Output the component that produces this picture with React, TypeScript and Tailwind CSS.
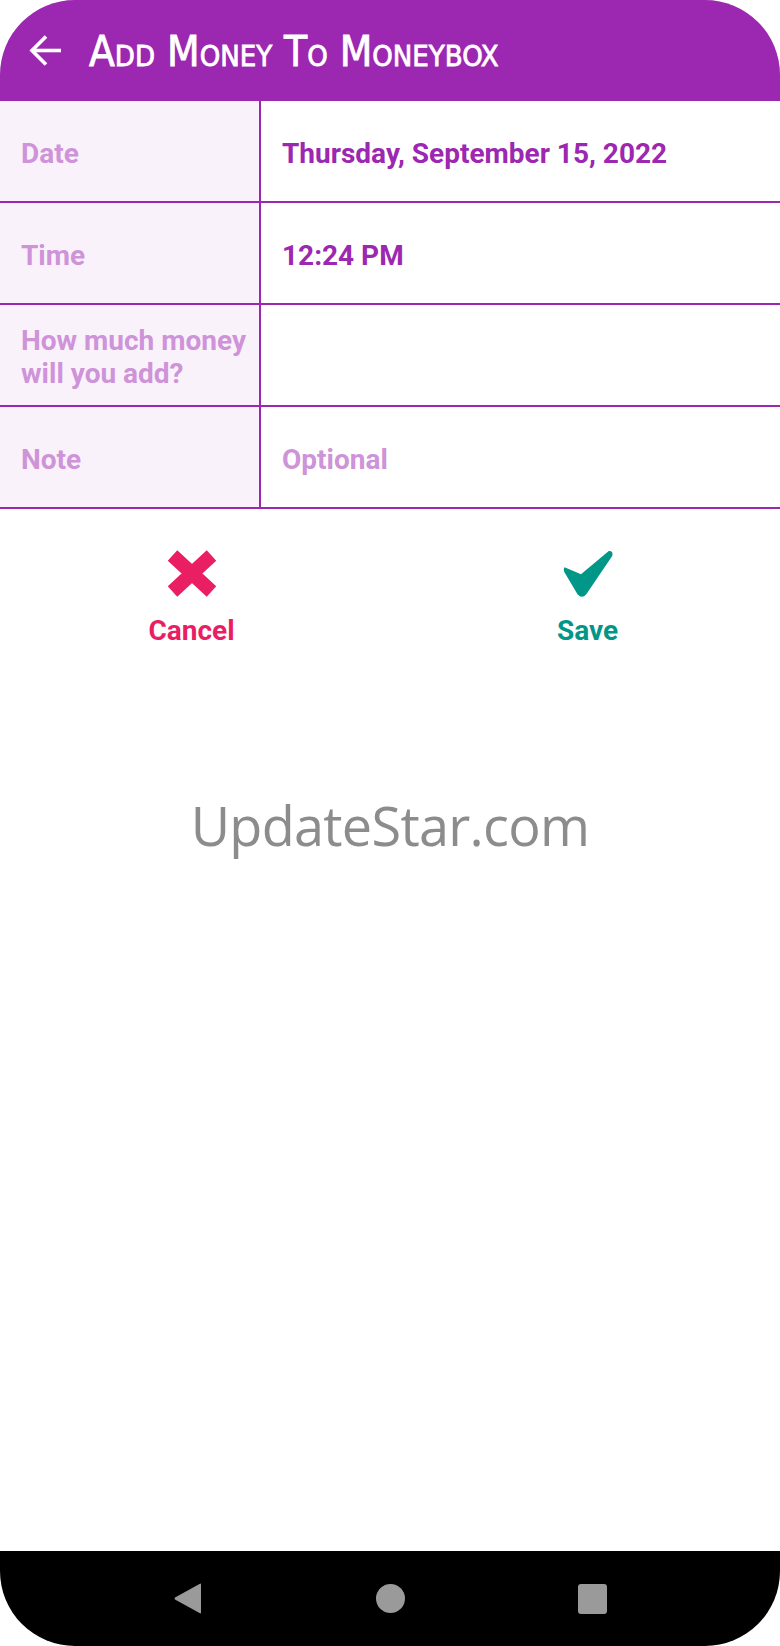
import { Fragment } from "react";

const rows = [
  { label: "Date", value: "Thursday, September 15, 2022", muted: false },
  { label: "Time", value: "12:24 PM", muted: false },
  { label: "How much money\nwill you add?", value: "", muted: false },
  { label: "Note", value: "Optional", muted: true },
];

function BackArrow() {
  return (
    <svg width="33" height="33" viewBox="0 0 33 33" fill="none">
      <path d="M32 16.5H4" stroke="#fff" strokeWidth="3.6" />
      <path d="M17 2.5L3 16.5L17 30.5" stroke="#fff" strokeWidth="3.6" />
    </svg>
  );
}

function CrossIcon() {
  return (
    <svg width="50" height="47" viewBox="0 0 50 47">
      <path d="M5.5 5.5L44.5 41.5M44.5 5.5L5.5 41.5" stroke="#e91e63" strokeWidth="14" />
    </svg>
  );
}

function CheckIcon() {
  return (
    <svg width="50" height="48" viewBox="0 0 50 48">
      <path
        d="M1.5 17.2Q0 19.5 1.6 22.4L14.5 44.2Q19 49.5 23.3 44.2L49.2 6Q50.5 0.5 45.8 1L18 24.2Z"
        fill="#009688"
      />
    </svg>
  );
}

export default function App() {
  return (
    <div className="h-[1646px] w-[780px] bg-white flex flex-col overflow-hidden font-['Roboto',sans-serif]">
      {/* App bar */}
      <div className="h-[101px] shrink-0 bg-[#9c27b0] rounded-t-[75px] flex items-center pl-[29px]">
        <BackArrow />
        <h1 className="ml-[27px] pt-[3px] text-white text-[42px] leading-none [font-variant:small-caps] [-webkit-text-stroke:0.8px_white] font-['DejaVu_Sans_Condensed','DejaVu_Sans',sans-serif] [font-stretch:condensed]">
          Add Money To Moneybox
        </h1>
      </div>

      {/* Form table */}
      <div className="grid grid-cols-[261px_1fr]">
        {rows.map((row) => (
          <Fragment key={row.label}>
            <div className="h-[102px] bg-[#faf2fb] border-b-2 border-r-2 border-[#9c27b0] flex items-center pl-[21px] pt-[4px]">
              <span className="whitespace-pre-line text-[28px] leading-[33px] font-bold text-[#ce93d8]">
                {row.label}
              </span>
            </div>
            <div className="h-[102px] border-b-2 border-[#9c27b0] flex items-center pl-[21px] pt-[4px]">
              <span
                className={
                  row.muted
                    ? "text-[28px] leading-[33px] font-bold text-[#ce93d8]"
                    : "text-[28px] leading-[33px] font-bold text-[#9c27b0]"
                }
              >
                {row.value}
              </span>
            </div>
          </Fragment>
        ))}
      </div>

      {/* Actions */}
      <div className="grid grid-cols-2 mt-[41px]">
        <button className="flex flex-col items-center pr-[7px]">
          <CrossIcon />
          <span className="mt-[17px] text-[28px] leading-[33px] font-bold text-[#e91e63]">Cancel</span>
        </button>
        <button className="flex flex-col items-center pl-[5px]">
          <CheckIcon />
          <span className="mt-[16px] text-[28px] leading-[33px] font-bold text-[#009688]">Save</span>
        </button>
      </div>

      {/* Watermark */}
      <div className="mt-[151px] text-center text-[54px] leading-none text-[#8c8c8c] font-['Open_Sans',sans-serif] tracking-[-0.7px]">
        UpdateStar.com
      </div>

      <div className="flex-1" />

      {/* System navigation bar */}
      <div className="h-[95px] shrink-0 bg-black rounded-b-[75px] flex items-center justify-center">
        <div className="w-[202px] flex justify-center">
          <svg width="28" height="31" viewBox="0 0 28 31">
            <path d="M27 1.5V29.5Q27 31 25.5 30L1 16.5Q0 15.5 1 14.5L25.5 1Q27 0 27 1.5Z" fill="#9a9a9a" />
          </svg>
        </div>
        <div className="w-[202px] flex justify-center">
          <div className="w-[29px] h-[29px] rounded-full bg-[#9a9a9a]" />
        </div>
        <div className="w-[202px] flex justify-center">
          <div className="w-[29px] h-[30px] rounded-[3px] bg-[#9a9a9a]" />
        </div>
      </div>
    </div>
  );
}
